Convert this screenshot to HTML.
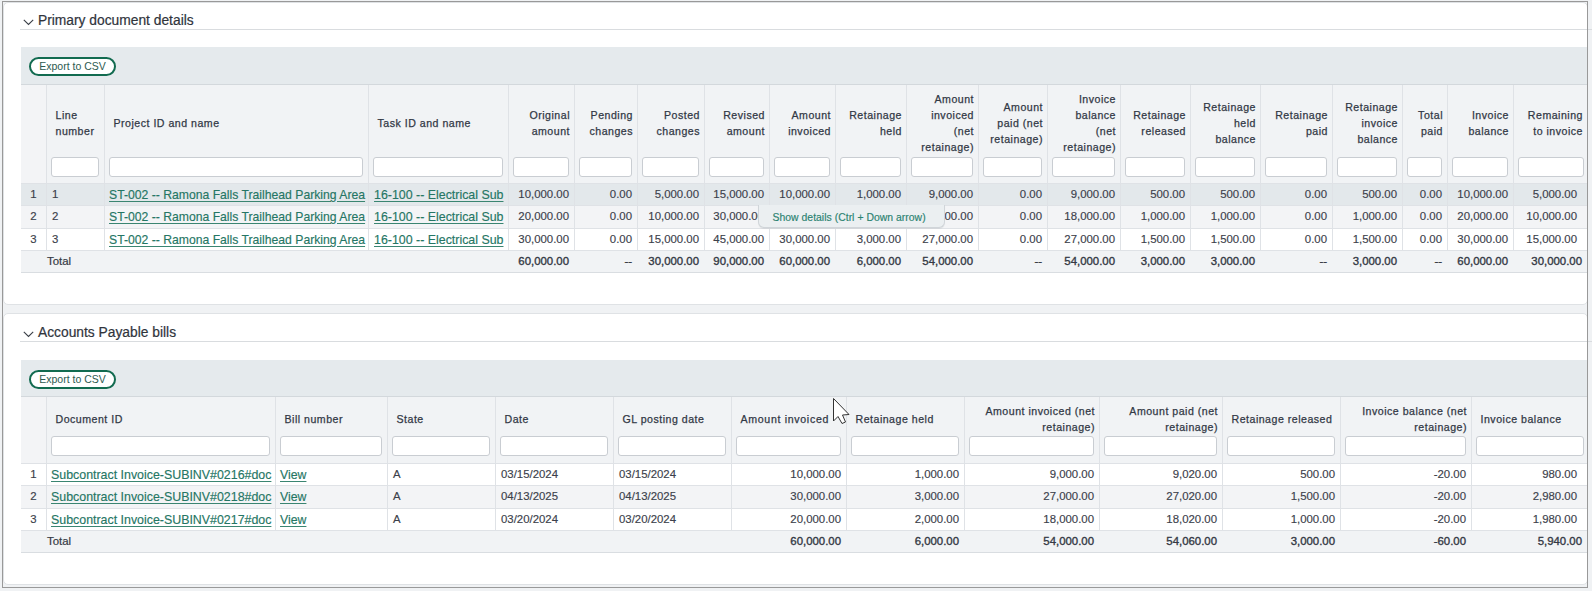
<!DOCTYPE html><html><head><meta charset="utf-8"><style>

html,body{margin:0;padding:0}
body{width:1592px;height:591px;overflow:hidden;position:relative;background:#f0f2f4;font-family:"Liberation Sans",sans-serif}
body div{position:absolute;box-sizing:border-box}
.t{white-space:nowrap;line-height:14px;-webkit-text-stroke:0.15px currentColor}
.h{white-space:nowrap;font-size:10.6px;line-height:16px;color:#323845;letter-spacing:0.5px;-webkit-text-stroke:0.25px #323845}
.inp{height:20px;background:#fff;border:1px solid #c9cdd2;border-radius:3px}
.btn{width:87px;height:19px;border:2px solid #126b50;border-radius:10px;background:#fff;font-size:10.5px;line-height:15px;color:#2d5a50;text-align:center;letter-spacing:0px}

</style></head><body>
<div style="left:3px;top:2px;width:1585px;height:303px;background:#fff;border:1px solid #dfe2e5;border-radius:5px"></div>
<div style="left:3px;top:313px;width:1585px;height:272px;background:#fff;border:1px solid #dfe2e5;border-radius:5px"></div>
<svg style="position:absolute;left:23px;top:19px" width="11" height="7" viewBox="0 0 11 7"><polyline points="0.8,0.8 5.5,5.5 10.2,0.8" fill="none" stroke="#3a3f47" stroke-width="1.1"/></svg>
<div class="t" style="left:38px;top:13px;font-size:13.8px;color:#30343c;line-height:16px;-webkit-text-stroke:0.2px #30343c">Primary document details</div>
<div style="left:20px;top:29px;width:1572px;height:1px;background:#d9dcdf"></div>
<div style="left:21px;top:47px;width:1566px;height:37px;background:#e5eaed"></div>
<div style="left:21px;top:84px;width:1566px;height:1px;background:#d3d8dc"></div>
<div class="btn" style="left:29px;top:57px;">Export to CSV</div>
<div style="left:21px;top:85px;width:1566px;height:98px;background:#f1f3f5"></div>
<div style="left:21px;top:85px;width:25px;height:98px;background:#f3f4f6"></div>
<div style="left:46px;top:85px;width:1px;height:187px;background:#dfe2e6"></div>
<div style="left:104px;top:85px;width:1px;height:187px;background:#dfe2e6"></div>
<div style="left:368px;top:85px;width:1px;height:187px;background:#dfe2e6"></div>
<div style="left:508px;top:85px;width:1px;height:187px;background:#dfe2e6"></div>
<div style="left:574px;top:85px;width:1px;height:187px;background:#dfe2e6"></div>
<div style="left:637px;top:85px;width:1px;height:187px;background:#dfe2e6"></div>
<div style="left:704px;top:85px;width:1px;height:187px;background:#dfe2e6"></div>
<div style="left:769px;top:85px;width:1px;height:187px;background:#dfe2e6"></div>
<div style="left:835px;top:85px;width:1px;height:187px;background:#dfe2e6"></div>
<div style="left:906px;top:85px;width:1px;height:187px;background:#dfe2e6"></div>
<div style="left:978px;top:85px;width:1px;height:187px;background:#dfe2e6"></div>
<div style="left:1047px;top:85px;width:1px;height:187px;background:#dfe2e6"></div>
<div style="left:1120px;top:85px;width:1px;height:187px;background:#dfe2e6"></div>
<div style="left:1190px;top:85px;width:1px;height:187px;background:#dfe2e6"></div>
<div style="left:1260px;top:85px;width:1px;height:187px;background:#dfe2e6"></div>
<div style="left:1332px;top:85px;width:1px;height:187px;background:#dfe2e6"></div>
<div style="left:1402px;top:85px;width:1px;height:187px;background:#dfe2e6"></div>
<div style="left:1447px;top:85px;width:1px;height:187px;background:#dfe2e6"></div>
<div style="left:1513px;top:85px;width:1px;height:187px;background:#dfe2e6"></div>
<div class="h" style="left:55.5px;top:107px;">Line<br>number</div>
<div class="h" style="left:113.5px;top:115px;">Project ID and name</div>
<div class="h" style="left:377.5px;top:115px;">Task ID and name</div>
<div class="h" style="left:508px;width:62px;top:107px;text-align:right">Original<br>amount</div>
<div class="h" style="left:574px;width:59px;top:107px;text-align:right">Pending<br>changes</div>
<div class="h" style="left:637px;width:63px;top:107px;text-align:right">Posted<br>changes</div>
<div class="h" style="left:704px;width:61px;top:107px;text-align:right">Revised<br>amount</div>
<div class="h" style="left:769px;width:62px;top:107px;text-align:right">Amount<br>invoiced</div>
<div class="h" style="left:835px;width:67px;top:107px;text-align:right">Retainage<br>held</div>
<div class="h" style="left:906px;width:68px;top:91px;text-align:right">Amount<br>invoiced<br>(net<br>retainage)</div>
<div class="h" style="left:978px;width:65px;top:99px;text-align:right">Amount<br>paid (net<br>retainage)</div>
<div class="h" style="left:1047px;width:69px;top:91px;text-align:right">Invoice<br>balance<br>(net<br>retainage)</div>
<div class="h" style="left:1120px;width:66px;top:107px;text-align:right">Retainage<br>released</div>
<div class="h" style="left:1190px;width:66px;top:99px;text-align:right">Retainage<br>held<br>balance</div>
<div class="h" style="left:1260px;width:68px;top:107px;text-align:right">Retainage<br>paid</div>
<div class="h" style="left:1332px;width:66px;top:99px;text-align:right">Retainage<br>invoice<br>balance</div>
<div class="h" style="left:1402px;width:41px;top:107px;text-align:right">Total<br>paid</div>
<div class="h" style="left:1447px;width:62px;top:107px;text-align:right">Invoice<br>balance</div>
<div class="h" style="left:1513px;width:70px;top:107px;text-align:right">Remaining<br>to invoice</div>
<div class="inp" style="left:51px;top:157px;width:48px;"></div>
<div class="inp" style="left:109px;top:157px;width:254px;"></div>
<div class="inp" style="left:373px;top:157px;width:130px;"></div>
<div class="inp" style="left:513px;top:157px;width:56px;"></div>
<div class="inp" style="left:579px;top:157px;width:53px;"></div>
<div class="inp" style="left:642px;top:157px;width:57px;"></div>
<div class="inp" style="left:709px;top:157px;width:55px;"></div>
<div class="inp" style="left:774px;top:157px;width:56px;"></div>
<div class="inp" style="left:840px;top:157px;width:61px;"></div>
<div class="inp" style="left:911px;top:157px;width:62px;"></div>
<div class="inp" style="left:983px;top:157px;width:59px;"></div>
<div class="inp" style="left:1052px;top:157px;width:63px;"></div>
<div class="inp" style="left:1125px;top:157px;width:60px;"></div>
<div class="inp" style="left:1195px;top:157px;width:60px;"></div>
<div class="inp" style="left:1265px;top:157px;width:62px;"></div>
<div class="inp" style="left:1337px;top:157px;width:60px;"></div>
<div class="inp" style="left:1407px;top:157px;width:35px;"></div>
<div class="inp" style="left:1452px;top:157px;width:56px;"></div>
<div class="inp" style="left:1518px;top:157px;width:66px;"></div>
<div style="left:21px;top:183px;width:1566px;height:22px;background:#e3e8eb"></div>
<div style="left:21px;top:183px;width:1566px;height:1px;background:#dfe2e6"></div>
<div style="left:46px;top:183px;width:1px;height:22px;background:#dfe2e6"></div>
<div style="left:104px;top:183px;width:1px;height:22px;background:#dfe2e6"></div>
<div style="left:368px;top:183px;width:1px;height:22px;background:#dfe2e6"></div>
<div style="left:508px;top:183px;width:1px;height:22px;background:#dfe2e6"></div>
<div style="left:574px;top:183px;width:1px;height:22px;background:#dfe2e6"></div>
<div style="left:637px;top:183px;width:1px;height:22px;background:#dfe2e6"></div>
<div style="left:704px;top:183px;width:1px;height:22px;background:#dfe2e6"></div>
<div style="left:769px;top:183px;width:1px;height:22px;background:#dfe2e6"></div>
<div style="left:835px;top:183px;width:1px;height:22px;background:#dfe2e6"></div>
<div style="left:906px;top:183px;width:1px;height:22px;background:#dfe2e6"></div>
<div style="left:978px;top:183px;width:1px;height:22px;background:#dfe2e6"></div>
<div style="left:1047px;top:183px;width:1px;height:22px;background:#dfe2e6"></div>
<div style="left:1120px;top:183px;width:1px;height:22px;background:#dfe2e6"></div>
<div style="left:1190px;top:183px;width:1px;height:22px;background:#dfe2e6"></div>
<div style="left:1260px;top:183px;width:1px;height:22px;background:#dfe2e6"></div>
<div style="left:1332px;top:183px;width:1px;height:22px;background:#dfe2e6"></div>
<div style="left:1402px;top:183px;width:1px;height:22px;background:#dfe2e6"></div>
<div style="left:1447px;top:183px;width:1px;height:22px;background:#dfe2e6"></div>
<div style="left:1513px;top:183px;width:1px;height:22px;background:#dfe2e6"></div>
<div class="t" style="left:21px;top:187px;width:25px;text-align:center;font-size:11.4px;color:#3c414b">1</div>
<div class="t" style="left:52px;top:187px;font-size:11.4px;color:#3c414b">1</div>
<div class="t" style="left:109px;top:188px;font-size:12.2px;color:#257664;text-decoration:underline;text-decoration-color:#3a8571;text-underline-offset:2px">ST-002 -- Ramona Falls Trailhead Parking Area</div>
<div class="t" style="left:374px;top:188px;font-size:12.4px;color:#257664;text-decoration:underline;text-decoration-color:#3a8571;text-underline-offset:2px">16-100 -- Electrical Sub</div>
<div class="t" style="left:508px;width:61px;top:187px;text-align:right;font-size:11.4px;color:#3c414b">10,000.00</div>
<div class="t" style="left:574px;width:58px;top:187px;text-align:right;font-size:11.4px;color:#3c414b">0.00</div>
<div class="t" style="left:637px;width:62px;top:187px;text-align:right;font-size:11.4px;color:#3c414b">5,000.00</div>
<div class="t" style="left:704px;width:60px;top:187px;text-align:right;font-size:11.4px;color:#3c414b">15,000.00</div>
<div class="t" style="left:769px;width:61px;top:187px;text-align:right;font-size:11.4px;color:#3c414b">10,000.00</div>
<div class="t" style="left:835px;width:66px;top:187px;text-align:right;font-size:11.4px;color:#3c414b">1,000.00</div>
<div class="t" style="left:906px;width:67px;top:187px;text-align:right;font-size:11.4px;color:#3c414b">9,000.00</div>
<div class="t" style="left:978px;width:64px;top:187px;text-align:right;font-size:11.4px;color:#3c414b">0.00</div>
<div class="t" style="left:1047px;width:68px;top:187px;text-align:right;font-size:11.4px;color:#3c414b">9,000.00</div>
<div class="t" style="left:1120px;width:65px;top:187px;text-align:right;font-size:11.4px;color:#3c414b">500.00</div>
<div class="t" style="left:1190px;width:65px;top:187px;text-align:right;font-size:11.4px;color:#3c414b">500.00</div>
<div class="t" style="left:1260px;width:67px;top:187px;text-align:right;font-size:11.4px;color:#3c414b">0.00</div>
<div class="t" style="left:1332px;width:65px;top:187px;text-align:right;font-size:11.4px;color:#3c414b">500.00</div>
<div class="t" style="left:1402px;width:40px;top:187px;text-align:right;font-size:11.4px;color:#3c414b">0.00</div>
<div class="t" style="left:1447px;width:61px;top:187px;text-align:right;font-size:11.4px;color:#3c414b">10,000.00</div>
<div class="t" style="left:1513px;width:64px;top:187px;text-align:right;font-size:11.4px;color:#3c414b">5,000.00</div>
<div style="left:21px;top:205px;width:1566px;height:23px;background:#f3f4f6"></div>
<div style="left:21px;top:205px;width:1566px;height:1px;background:#dfe2e6"></div>
<div style="left:46px;top:205px;width:1px;height:23px;background:#dfe2e6"></div>
<div style="left:104px;top:205px;width:1px;height:23px;background:#dfe2e6"></div>
<div style="left:368px;top:205px;width:1px;height:23px;background:#dfe2e6"></div>
<div style="left:508px;top:205px;width:1px;height:23px;background:#dfe2e6"></div>
<div style="left:574px;top:205px;width:1px;height:23px;background:#dfe2e6"></div>
<div style="left:637px;top:205px;width:1px;height:23px;background:#dfe2e6"></div>
<div style="left:704px;top:205px;width:1px;height:23px;background:#dfe2e6"></div>
<div style="left:769px;top:205px;width:1px;height:23px;background:#dfe2e6"></div>
<div style="left:835px;top:205px;width:1px;height:23px;background:#dfe2e6"></div>
<div style="left:906px;top:205px;width:1px;height:23px;background:#dfe2e6"></div>
<div style="left:978px;top:205px;width:1px;height:23px;background:#dfe2e6"></div>
<div style="left:1047px;top:205px;width:1px;height:23px;background:#dfe2e6"></div>
<div style="left:1120px;top:205px;width:1px;height:23px;background:#dfe2e6"></div>
<div style="left:1190px;top:205px;width:1px;height:23px;background:#dfe2e6"></div>
<div style="left:1260px;top:205px;width:1px;height:23px;background:#dfe2e6"></div>
<div style="left:1332px;top:205px;width:1px;height:23px;background:#dfe2e6"></div>
<div style="left:1402px;top:205px;width:1px;height:23px;background:#dfe2e6"></div>
<div style="left:1447px;top:205px;width:1px;height:23px;background:#dfe2e6"></div>
<div style="left:1513px;top:205px;width:1px;height:23px;background:#dfe2e6"></div>
<div class="t" style="left:21px;top:209px;width:25px;text-align:center;font-size:11.4px;color:#3c414b">2</div>
<div class="t" style="left:52px;top:209px;font-size:11.4px;color:#3c414b">2</div>
<div class="t" style="left:109px;top:210px;font-size:12.2px;color:#257664;text-decoration:underline;text-decoration-color:#3a8571;text-underline-offset:2px">ST-002 -- Ramona Falls Trailhead Parking Area</div>
<div class="t" style="left:374px;top:210px;font-size:12.4px;color:#257664;text-decoration:underline;text-decoration-color:#3a8571;text-underline-offset:2px">16-100 -- Electrical Sub</div>
<div class="t" style="left:508px;width:61px;top:209px;text-align:right;font-size:11.4px;color:#3c414b">20,000.00</div>
<div class="t" style="left:574px;width:58px;top:209px;text-align:right;font-size:11.4px;color:#3c414b">0.00</div>
<div class="t" style="left:637px;width:62px;top:209px;text-align:right;font-size:11.4px;color:#3c414b">10,000.00</div>
<div class="t" style="left:704px;width:60px;top:209px;text-align:right;font-size:11.4px;color:#3c414b">30,000.00</div>
<div class="t" style="left:769px;width:61px;top:209px;text-align:right;font-size:11.4px;color:#3c414b">20,000.00</div>
<div class="t" style="left:835px;width:66px;top:209px;text-align:right;font-size:11.4px;color:#3c414b">2,000.00</div>
<div class="t" style="left:906px;width:67px;top:209px;text-align:right;font-size:11.4px;color:#3c414b">18,000.00</div>
<div class="t" style="left:978px;width:64px;top:209px;text-align:right;font-size:11.4px;color:#3c414b">0.00</div>
<div class="t" style="left:1047px;width:68px;top:209px;text-align:right;font-size:11.4px;color:#3c414b">18,000.00</div>
<div class="t" style="left:1120px;width:65px;top:209px;text-align:right;font-size:11.4px;color:#3c414b">1,000.00</div>
<div class="t" style="left:1190px;width:65px;top:209px;text-align:right;font-size:11.4px;color:#3c414b">1,000.00</div>
<div class="t" style="left:1260px;width:67px;top:209px;text-align:right;font-size:11.4px;color:#3c414b">0.00</div>
<div class="t" style="left:1332px;width:65px;top:209px;text-align:right;font-size:11.4px;color:#3c414b">1,000.00</div>
<div class="t" style="left:1402px;width:40px;top:209px;text-align:right;font-size:11.4px;color:#3c414b">0.00</div>
<div class="t" style="left:1447px;width:61px;top:209px;text-align:right;font-size:11.4px;color:#3c414b">20,000.00</div>
<div class="t" style="left:1513px;width:64px;top:209px;text-align:right;font-size:11.4px;color:#3c414b">10,000.00</div>
<div style="left:21px;top:228px;width:1566px;height:22px;background:#ffffff"></div>
<div style="left:21px;top:228px;width:1566px;height:1px;background:#dfe2e6"></div>
<div style="left:46px;top:228px;width:1px;height:22px;background:#dfe2e6"></div>
<div style="left:104px;top:228px;width:1px;height:22px;background:#dfe2e6"></div>
<div style="left:368px;top:228px;width:1px;height:22px;background:#dfe2e6"></div>
<div style="left:508px;top:228px;width:1px;height:22px;background:#dfe2e6"></div>
<div style="left:574px;top:228px;width:1px;height:22px;background:#dfe2e6"></div>
<div style="left:637px;top:228px;width:1px;height:22px;background:#dfe2e6"></div>
<div style="left:704px;top:228px;width:1px;height:22px;background:#dfe2e6"></div>
<div style="left:769px;top:228px;width:1px;height:22px;background:#dfe2e6"></div>
<div style="left:835px;top:228px;width:1px;height:22px;background:#dfe2e6"></div>
<div style="left:906px;top:228px;width:1px;height:22px;background:#dfe2e6"></div>
<div style="left:978px;top:228px;width:1px;height:22px;background:#dfe2e6"></div>
<div style="left:1047px;top:228px;width:1px;height:22px;background:#dfe2e6"></div>
<div style="left:1120px;top:228px;width:1px;height:22px;background:#dfe2e6"></div>
<div style="left:1190px;top:228px;width:1px;height:22px;background:#dfe2e6"></div>
<div style="left:1260px;top:228px;width:1px;height:22px;background:#dfe2e6"></div>
<div style="left:1332px;top:228px;width:1px;height:22px;background:#dfe2e6"></div>
<div style="left:1402px;top:228px;width:1px;height:22px;background:#dfe2e6"></div>
<div style="left:1447px;top:228px;width:1px;height:22px;background:#dfe2e6"></div>
<div style="left:1513px;top:228px;width:1px;height:22px;background:#dfe2e6"></div>
<div class="t" style="left:21px;top:232px;width:25px;text-align:center;font-size:11.4px;color:#3c414b">3</div>
<div class="t" style="left:52px;top:232px;font-size:11.4px;color:#3c414b">3</div>
<div class="t" style="left:109px;top:233px;font-size:12.2px;color:#257664;text-decoration:underline;text-decoration-color:#3a8571;text-underline-offset:2px">ST-002 -- Ramona Falls Trailhead Parking Area</div>
<div class="t" style="left:374px;top:233px;font-size:12.4px;color:#257664;text-decoration:underline;text-decoration-color:#3a8571;text-underline-offset:2px">16-100 -- Electrical Sub</div>
<div class="t" style="left:508px;width:61px;top:232px;text-align:right;font-size:11.4px;color:#3c414b">30,000.00</div>
<div class="t" style="left:574px;width:58px;top:232px;text-align:right;font-size:11.4px;color:#3c414b">0.00</div>
<div class="t" style="left:637px;width:62px;top:232px;text-align:right;font-size:11.4px;color:#3c414b">15,000.00</div>
<div class="t" style="left:704px;width:60px;top:232px;text-align:right;font-size:11.4px;color:#3c414b">45,000.00</div>
<div class="t" style="left:769px;width:61px;top:232px;text-align:right;font-size:11.4px;color:#3c414b">30,000.00</div>
<div class="t" style="left:835px;width:66px;top:232px;text-align:right;font-size:11.4px;color:#3c414b">3,000.00</div>
<div class="t" style="left:906px;width:67px;top:232px;text-align:right;font-size:11.4px;color:#3c414b">27,000.00</div>
<div class="t" style="left:978px;width:64px;top:232px;text-align:right;font-size:11.4px;color:#3c414b">0.00</div>
<div class="t" style="left:1047px;width:68px;top:232px;text-align:right;font-size:11.4px;color:#3c414b">27,000.00</div>
<div class="t" style="left:1120px;width:65px;top:232px;text-align:right;font-size:11.4px;color:#3c414b">1,500.00</div>
<div class="t" style="left:1190px;width:65px;top:232px;text-align:right;font-size:11.4px;color:#3c414b">1,500.00</div>
<div class="t" style="left:1260px;width:67px;top:232px;text-align:right;font-size:11.4px;color:#3c414b">0.00</div>
<div class="t" style="left:1332px;width:65px;top:232px;text-align:right;font-size:11.4px;color:#3c414b">1,500.00</div>
<div class="t" style="left:1402px;width:40px;top:232px;text-align:right;font-size:11.4px;color:#3c414b">0.00</div>
<div class="t" style="left:1447px;width:61px;top:232px;text-align:right;font-size:11.4px;color:#3c414b">30,000.00</div>
<div class="t" style="left:1513px;width:64px;top:232px;text-align:right;font-size:11.4px;color:#3c414b">15,000.00</div>
<div style="left:21px;top:250px;width:1566px;height:22px;background:#f1f3f5"></div>
<div style="left:21px;top:250px;width:1566px;height:1px;background:#dfe2e6"></div>
<div style="left:21px;top:272px;width:1566px;height:1px;background:#d9dde1"></div>
<div class="t" style="left:47px;top:254px;font-size:11.4px;color:#343944;-webkit-text-stroke:0.2px #343944">Total</div>
<div class="t" style="left:508px;width:61px;top:254px;text-align:right;font-size:11.4px;color:#343944;-webkit-text-stroke:0.35px #343944">60,000.00</div>
<div class="t" style="left:574px;width:58px;top:254px;text-align:right;font-size:11.4px;color:#343944;-webkit-text-stroke:0.35px #343944">--</div>
<div class="t" style="left:637px;width:62px;top:254px;text-align:right;font-size:11.4px;color:#343944;-webkit-text-stroke:0.35px #343944">30,000.00</div>
<div class="t" style="left:704px;width:60px;top:254px;text-align:right;font-size:11.4px;color:#343944;-webkit-text-stroke:0.35px #343944">90,000.00</div>
<div class="t" style="left:769px;width:61px;top:254px;text-align:right;font-size:11.4px;color:#343944;-webkit-text-stroke:0.35px #343944">60,000.00</div>
<div class="t" style="left:835px;width:66px;top:254px;text-align:right;font-size:11.4px;color:#343944;-webkit-text-stroke:0.35px #343944">6,000.00</div>
<div class="t" style="left:906px;width:67px;top:254px;text-align:right;font-size:11.4px;color:#343944;-webkit-text-stroke:0.35px #343944">54,000.00</div>
<div class="t" style="left:978px;width:64px;top:254px;text-align:right;font-size:11.4px;color:#343944;-webkit-text-stroke:0.35px #343944">--</div>
<div class="t" style="left:1047px;width:68px;top:254px;text-align:right;font-size:11.4px;color:#343944;-webkit-text-stroke:0.35px #343944">54,000.00</div>
<div class="t" style="left:1120px;width:65px;top:254px;text-align:right;font-size:11.4px;color:#343944;-webkit-text-stroke:0.35px #343944">3,000.00</div>
<div class="t" style="left:1190px;width:65px;top:254px;text-align:right;font-size:11.4px;color:#343944;-webkit-text-stroke:0.35px #343944">3,000.00</div>
<div class="t" style="left:1260px;width:67px;top:254px;text-align:right;font-size:11.4px;color:#343944;-webkit-text-stroke:0.35px #343944">--</div>
<div class="t" style="left:1332px;width:65px;top:254px;text-align:right;font-size:11.4px;color:#343944;-webkit-text-stroke:0.35px #343944">3,000.00</div>
<div class="t" style="left:1402px;width:40px;top:254px;text-align:right;font-size:11.4px;color:#343944;-webkit-text-stroke:0.35px #343944">--</div>
<div class="t" style="left:1447px;width:61px;top:254px;text-align:right;font-size:11.4px;color:#343944;-webkit-text-stroke:0.35px #343944">60,000.00</div>
<div class="t" style="left:1513px;width:69px;top:254px;text-align:right;font-size:11.4px;color:#343944;-webkit-text-stroke:0.35px #343944">30,000.00</div>
<svg style="position:absolute;left:23px;top:331px" width="11" height="7" viewBox="0 0 11 7"><polyline points="0.8,0.8 5.5,5.5 10.2,0.8" fill="none" stroke="#3a3f47" stroke-width="1.1"/></svg>
<div class="t" style="left:38px;top:325px;font-size:13.8px;color:#30343c;line-height:16px;-webkit-text-stroke:0.2px #30343c">Accounts Payable bills</div>
<div style="left:20px;top:341px;width:1572px;height:1px;background:#d9dcdf"></div>
<div style="left:21px;top:360px;width:1566px;height:36px;background:#e5eaed"></div>
<div style="left:21px;top:396px;width:1566px;height:1px;background:#d3d8dc"></div>
<div class="btn" style="left:29px;top:370px;">Export to CSV</div>
<div style="left:21px;top:397px;width:1566px;height:66px;background:#f1f3f5"></div>
<div style="left:21px;top:397px;width:25px;height:66px;background:#f3f4f6"></div>
<div style="left:46px;top:397px;width:1px;height:155px;background:#dfe2e6"></div>
<div style="left:275px;top:397px;width:1px;height:155px;background:#dfe2e6"></div>
<div style="left:387px;top:397px;width:1px;height:155px;background:#dfe2e6"></div>
<div style="left:495px;top:397px;width:1px;height:155px;background:#dfe2e6"></div>
<div style="left:613px;top:397px;width:1px;height:155px;background:#dfe2e6"></div>
<div style="left:731px;top:397px;width:1px;height:155px;background:#dfe2e6"></div>
<div style="left:846px;top:397px;width:1px;height:155px;background:#dfe2e6"></div>
<div style="left:964px;top:397px;width:1px;height:155px;background:#dfe2e6"></div>
<div style="left:1099px;top:397px;width:1px;height:155px;background:#dfe2e6"></div>
<div style="left:1222px;top:397px;width:1px;height:155px;background:#dfe2e6"></div>
<div style="left:1340px;top:397px;width:1px;height:155px;background:#dfe2e6"></div>
<div style="left:1471px;top:397px;width:1px;height:155px;background:#dfe2e6"></div>
<div class="h" style="left:55.5px;top:411px;">Document ID</div>
<div class="h" style="left:284.5px;top:411px;">Bill number</div>
<div class="h" style="left:396.5px;top:411px;">State</div>
<div class="h" style="left:504.5px;top:411px;">Date</div>
<div class="h" style="left:622.5px;top:411px;">GL posting date</div>
<div class="h" style="left:740.5px;top:411px;letter-spacing:0.68px;">Amount invoiced</div>
<div class="h" style="left:855.5px;top:411px;">Retainage held</div>
<div class="h" style="left:964px;width:131px;top:403px;text-align:right">Amount invoiced (net<br>retainage)</div>
<div class="h" style="left:1099px;width:119px;top:403px;text-align:right">Amount paid (net<br>retainage)</div>
<div class="h" style="left:1231.5px;top:411px;">Retainage released</div>
<div class="h" style="left:1340px;width:127px;top:403px;text-align:right">Invoice balance (net<br>retainage)</div>
<div class="h" style="left:1480.5px;top:411px;">Invoice balance</div>
<div class="inp" style="left:51px;top:436px;width:219px;"></div>
<div class="inp" style="left:280px;top:436px;width:102px;"></div>
<div class="inp" style="left:392px;top:436px;width:98px;"></div>
<div class="inp" style="left:500px;top:436px;width:108px;"></div>
<div class="inp" style="left:618px;top:436px;width:108px;"></div>
<div class="inp" style="left:736px;top:436px;width:105px;"></div>
<div class="inp" style="left:851px;top:436px;width:108px;"></div>
<div class="inp" style="left:969px;top:436px;width:125px;"></div>
<div class="inp" style="left:1104px;top:436px;width:113px;"></div>
<div class="inp" style="left:1227px;top:436px;width:108px;"></div>
<div class="inp" style="left:1345px;top:436px;width:121px;"></div>
<div class="inp" style="left:1476px;top:436px;width:108px;"></div>
<div style="left:21px;top:463px;width:1566px;height:22px;background:#ffffff"></div>
<div style="left:21px;top:463px;width:1566px;height:1px;background:#dfe2e6"></div>
<div style="left:46px;top:463px;width:1px;height:22px;background:#dfe2e6"></div>
<div style="left:275px;top:463px;width:1px;height:22px;background:#dfe2e6"></div>
<div style="left:387px;top:463px;width:1px;height:22px;background:#dfe2e6"></div>
<div style="left:495px;top:463px;width:1px;height:22px;background:#dfe2e6"></div>
<div style="left:613px;top:463px;width:1px;height:22px;background:#dfe2e6"></div>
<div style="left:731px;top:463px;width:1px;height:22px;background:#dfe2e6"></div>
<div style="left:846px;top:463px;width:1px;height:22px;background:#dfe2e6"></div>
<div style="left:964px;top:463px;width:1px;height:22px;background:#dfe2e6"></div>
<div style="left:1099px;top:463px;width:1px;height:22px;background:#dfe2e6"></div>
<div style="left:1222px;top:463px;width:1px;height:22px;background:#dfe2e6"></div>
<div style="left:1340px;top:463px;width:1px;height:22px;background:#dfe2e6"></div>
<div style="left:1471px;top:463px;width:1px;height:22px;background:#dfe2e6"></div>
<div class="t" style="left:21px;top:467px;width:25px;text-align:center;font-size:11.4px;color:#3c414b">1</div>
<div class="t" style="left:51px;top:468px;font-size:12.4px;color:#257664;text-decoration:underline;text-decoration-color:#3a8571;text-underline-offset:2px">Subcontract Invoice-SUBINV#0216#doc</div>
<div class="t" style="left:280px;top:468px;font-size:12.3px;color:#257664;text-decoration:underline;text-decoration-color:#3a8571;text-underline-offset:2px">View</div>
<div class="t" style="left:393px;top:467px;font-size:11.4px;color:#3c414b">A</div>
<div class="t" style="left:501px;top:467px;font-size:11.4px;color:#3c414b">03/15/2024</div>
<div class="t" style="left:619px;top:467px;font-size:11.4px;color:#3c414b">03/15/2024</div>
<div class="t" style="left:731px;width:110px;top:467px;text-align:right;font-size:11.4px;color:#3c414b">10,000.00</div>
<div class="t" style="left:846px;width:113px;top:467px;text-align:right;font-size:11.4px;color:#3c414b">1,000.00</div>
<div class="t" style="left:964px;width:130px;top:467px;text-align:right;font-size:11.4px;color:#3c414b">9,000.00</div>
<div class="t" style="left:1099px;width:118px;top:467px;text-align:right;font-size:11.4px;color:#3c414b">9,020.00</div>
<div class="t" style="left:1222px;width:113px;top:467px;text-align:right;font-size:11.4px;color:#3c414b">500.00</div>
<div class="t" style="left:1340px;width:126px;top:467px;text-align:right;font-size:11.4px;color:#3c414b">-20.00</div>
<div class="t" style="left:1471px;width:106px;top:467px;text-align:right;font-size:11.4px;color:#3c414b">980.00</div>
<div style="left:21px;top:485px;width:1566px;height:23px;background:#f3f4f6"></div>
<div style="left:21px;top:485px;width:1566px;height:1px;background:#dfe2e6"></div>
<div style="left:46px;top:485px;width:1px;height:23px;background:#dfe2e6"></div>
<div style="left:275px;top:485px;width:1px;height:23px;background:#dfe2e6"></div>
<div style="left:387px;top:485px;width:1px;height:23px;background:#dfe2e6"></div>
<div style="left:495px;top:485px;width:1px;height:23px;background:#dfe2e6"></div>
<div style="left:613px;top:485px;width:1px;height:23px;background:#dfe2e6"></div>
<div style="left:731px;top:485px;width:1px;height:23px;background:#dfe2e6"></div>
<div style="left:846px;top:485px;width:1px;height:23px;background:#dfe2e6"></div>
<div style="left:964px;top:485px;width:1px;height:23px;background:#dfe2e6"></div>
<div style="left:1099px;top:485px;width:1px;height:23px;background:#dfe2e6"></div>
<div style="left:1222px;top:485px;width:1px;height:23px;background:#dfe2e6"></div>
<div style="left:1340px;top:485px;width:1px;height:23px;background:#dfe2e6"></div>
<div style="left:1471px;top:485px;width:1px;height:23px;background:#dfe2e6"></div>
<div class="t" style="left:21px;top:489px;width:25px;text-align:center;font-size:11.4px;color:#3c414b">2</div>
<div class="t" style="left:51px;top:490px;font-size:12.4px;color:#257664;text-decoration:underline;text-decoration-color:#3a8571;text-underline-offset:2px">Subcontract Invoice-SUBINV#0218#doc</div>
<div class="t" style="left:280px;top:490px;font-size:12.3px;color:#257664;text-decoration:underline;text-decoration-color:#3a8571;text-underline-offset:2px">View</div>
<div class="t" style="left:393px;top:489px;font-size:11.4px;color:#3c414b">A</div>
<div class="t" style="left:501px;top:489px;font-size:11.4px;color:#3c414b">04/13/2025</div>
<div class="t" style="left:619px;top:489px;font-size:11.4px;color:#3c414b">04/13/2025</div>
<div class="t" style="left:731px;width:110px;top:489px;text-align:right;font-size:11.4px;color:#3c414b">30,000.00</div>
<div class="t" style="left:846px;width:113px;top:489px;text-align:right;font-size:11.4px;color:#3c414b">3,000.00</div>
<div class="t" style="left:964px;width:130px;top:489px;text-align:right;font-size:11.4px;color:#3c414b">27,000.00</div>
<div class="t" style="left:1099px;width:118px;top:489px;text-align:right;font-size:11.4px;color:#3c414b">27,020.00</div>
<div class="t" style="left:1222px;width:113px;top:489px;text-align:right;font-size:11.4px;color:#3c414b">1,500.00</div>
<div class="t" style="left:1340px;width:126px;top:489px;text-align:right;font-size:11.4px;color:#3c414b">-20.00</div>
<div class="t" style="left:1471px;width:106px;top:489px;text-align:right;font-size:11.4px;color:#3c414b">2,980.00</div>
<div style="left:21px;top:508px;width:1566px;height:22px;background:#ffffff"></div>
<div style="left:21px;top:508px;width:1566px;height:1px;background:#dfe2e6"></div>
<div style="left:46px;top:508px;width:1px;height:22px;background:#dfe2e6"></div>
<div style="left:275px;top:508px;width:1px;height:22px;background:#dfe2e6"></div>
<div style="left:387px;top:508px;width:1px;height:22px;background:#dfe2e6"></div>
<div style="left:495px;top:508px;width:1px;height:22px;background:#dfe2e6"></div>
<div style="left:613px;top:508px;width:1px;height:22px;background:#dfe2e6"></div>
<div style="left:731px;top:508px;width:1px;height:22px;background:#dfe2e6"></div>
<div style="left:846px;top:508px;width:1px;height:22px;background:#dfe2e6"></div>
<div style="left:964px;top:508px;width:1px;height:22px;background:#dfe2e6"></div>
<div style="left:1099px;top:508px;width:1px;height:22px;background:#dfe2e6"></div>
<div style="left:1222px;top:508px;width:1px;height:22px;background:#dfe2e6"></div>
<div style="left:1340px;top:508px;width:1px;height:22px;background:#dfe2e6"></div>
<div style="left:1471px;top:508px;width:1px;height:22px;background:#dfe2e6"></div>
<div class="t" style="left:21px;top:512px;width:25px;text-align:center;font-size:11.4px;color:#3c414b">3</div>
<div class="t" style="left:51px;top:513px;font-size:12.4px;color:#257664;text-decoration:underline;text-decoration-color:#3a8571;text-underline-offset:2px">Subcontract Invoice-SUBINV#0217#doc</div>
<div class="t" style="left:280px;top:513px;font-size:12.3px;color:#257664;text-decoration:underline;text-decoration-color:#3a8571;text-underline-offset:2px">View</div>
<div class="t" style="left:393px;top:512px;font-size:11.4px;color:#3c414b">A</div>
<div class="t" style="left:501px;top:512px;font-size:11.4px;color:#3c414b">03/20/2024</div>
<div class="t" style="left:619px;top:512px;font-size:11.4px;color:#3c414b">03/20/2024</div>
<div class="t" style="left:731px;width:110px;top:512px;text-align:right;font-size:11.4px;color:#3c414b">20,000.00</div>
<div class="t" style="left:846px;width:113px;top:512px;text-align:right;font-size:11.4px;color:#3c414b">2,000.00</div>
<div class="t" style="left:964px;width:130px;top:512px;text-align:right;font-size:11.4px;color:#3c414b">18,000.00</div>
<div class="t" style="left:1099px;width:118px;top:512px;text-align:right;font-size:11.4px;color:#3c414b">18,020.00</div>
<div class="t" style="left:1222px;width:113px;top:512px;text-align:right;font-size:11.4px;color:#3c414b">1,000.00</div>
<div class="t" style="left:1340px;width:126px;top:512px;text-align:right;font-size:11.4px;color:#3c414b">-20.00</div>
<div class="t" style="left:1471px;width:106px;top:512px;text-align:right;font-size:11.4px;color:#3c414b">1,980.00</div>
<div style="left:21px;top:530px;width:1566px;height:22px;background:#f1f3f5"></div>
<div style="left:21px;top:530px;width:1566px;height:1px;background:#dfe2e6"></div>
<div style="left:21px;top:552px;width:1566px;height:1px;background:#d9dde1"></div>
<div class="t" style="left:47px;top:534px;font-size:11.4px;color:#343944;-webkit-text-stroke:0.2px #343944">Total</div>
<div class="t" style="left:731px;width:110px;top:534px;text-align:right;font-size:11.4px;color:#343944;-webkit-text-stroke:0.35px #343944">60,000.00</div>
<div class="t" style="left:846px;width:113px;top:534px;text-align:right;font-size:11.4px;color:#343944;-webkit-text-stroke:0.35px #343944">6,000.00</div>
<div class="t" style="left:964px;width:130px;top:534px;text-align:right;font-size:11.4px;color:#343944;-webkit-text-stroke:0.35px #343944">54,000.00</div>
<div class="t" style="left:1099px;width:118px;top:534px;text-align:right;font-size:11.4px;color:#343944;-webkit-text-stroke:0.35px #343944">54,060.00</div>
<div class="t" style="left:1222px;width:113px;top:534px;text-align:right;font-size:11.4px;color:#343944;-webkit-text-stroke:0.35px #343944">3,000.00</div>
<div class="t" style="left:1340px;width:126px;top:534px;text-align:right;font-size:11.4px;color:#343944;-webkit-text-stroke:0.35px #343944">-60.00</div>
<div class="t" style="left:1471px;width:111px;top:534px;text-align:right;font-size:11.4px;color:#343944;-webkit-text-stroke:0.35px #343944">5,940.00</div>
<div style="left:758px;top:205px;width:187px;height:23px;background:#ebeff1;border:1px solid #d0d5d9;border-top:none;border-radius:0 0 6px 6px;box-shadow:0 1px 1px rgba(0,0,0,0.06)"></div>
<div class="t" style="left:772.5px;top:210.5px;font-size:10.4px;line-height:14px;color:#2a8270;letter-spacing:0.03px">Show details (Ctrl + Down arrow)</div>
<svg style="position:absolute;left:832px;top:397px" width="19" height="29" viewBox="0 0 19 29"><path d="M1.5,1.5 L1.5,24 L6,19.5 L10,26.5 L13.5,25 L10.5,18 L17,17.5 Z" fill="#fff" stroke="#333" stroke-width="1" stroke-linejoin="round"/></svg>
<div style="left:2px;top:1px;width:1586px;height:587px;border:1px solid #999"></div>
</body></html>
